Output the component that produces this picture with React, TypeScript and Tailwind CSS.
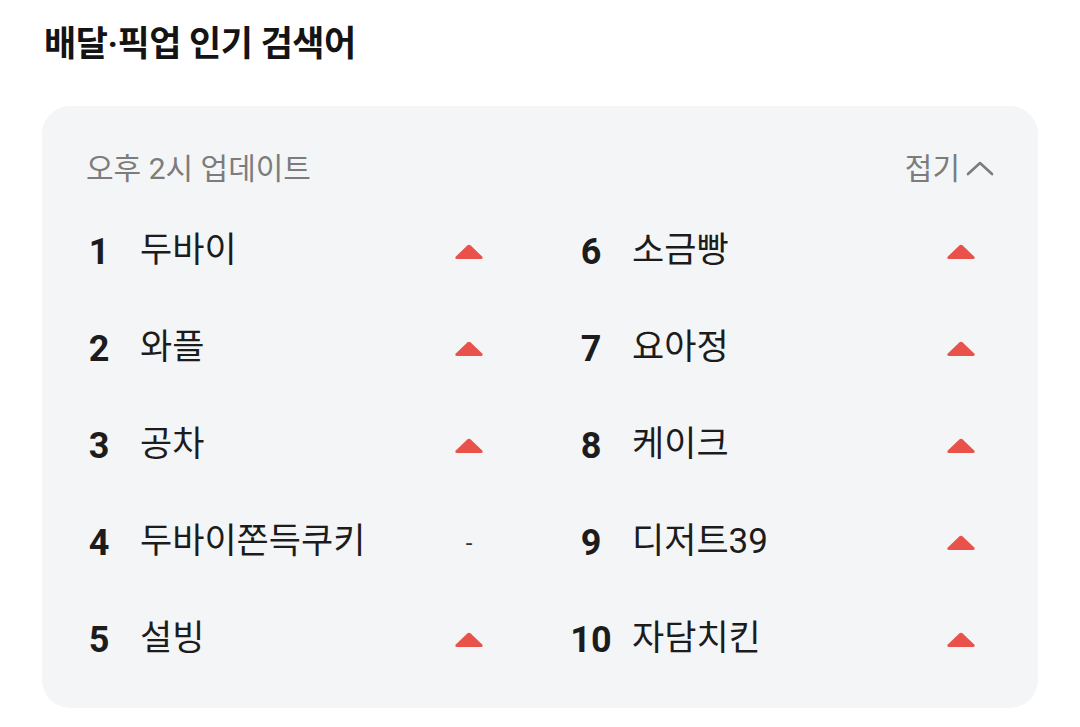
import React from "react";

const left = [
  { rank: 1, word: "두바이", trend: "up" },
  { rank: 2, word: "와플", trend: "up" },
  { rank: 3, word: "공차", trend: "up" },
  { rank: 4, word: "두바이쫀득쿠키", trend: "same" },
  { rank: 5, word: "설빙", trend: "up" },
];

const right = [
  { rank: 6, word: "소금빵", trend: "up" },
  { rank: 7, word: "요아정", trend: "up" },
  { rank: 8, word: "케이크", trend: "up" },
  { rank: 9, word: "디저트39", trend: "up" },
  { rank: 10, word: "자담치킨", trend: "up" },
];

const UpMark = () => (
  <svg width="30" height="16" viewBox="0 0 30 16" aria-hidden="true">
    <path
      d="M13.3 1.6 Q15 0 16.7 1.6 L28.2 12.6 Q29.6 14.9 27 15 L3 15 Q0.4 14.9 1.8 12.6 Z"
      fill="#e9524a"
    />
  </svg>
);

const Row = ({ rank, word, trend }: { rank: number; word: string; trend: string }) => (
  <li className="flex h-[97px] items-center">
    <span className="w-[26px] text-center text-[36px] font-bold text-[#1c1c1c] whitespace-nowrap flex justify-center">
      {rank}
    </span>
    <span className="ml-[28px] flex-1 text-[35px] text-[#1c1c1c] whitespace-nowrap">{word}</span>
    <span className="flex w-[30px] justify-center">
      {trend === "up" ? <UpMark /> : <span className="text-[24px] text-[#333]">-</span>}
    </span>
  </li>
);

export default function App() {
  return (
    <div className="w-[1080px] h-[727px] bg-white [font-family:Roboto,'Noto_Sans_CJK_KR',sans-serif] overflow-hidden">
      <h1 className="pl-[44px] pt-[22px] text-[35px] font-bold leading-[46px] text-[#141414] tracking-[-0.5px]">
        배달·픽업 인기 검색어
      </h1>
      <section className="mx-[42px] mt-[38px] rounded-[28px] bg-[#f4f5f7] pl-[44px] pr-[44px] pt-[44px] pb-[20px]">
        <div className="flex h-[36px] items-center justify-between text-[30px] text-[#7c7c7c]">
          <span>오후 2시 업데이트</span>
          <button className="flex items-center gap-[6px] text-[#7c7c7c]">
            접기
            <svg width="28" height="16" viewBox="0 0 28 16" fill="none" aria-hidden="true">
              <path d="M2 14 L14 3 L26 14" stroke="#7c7c7c" strokeWidth="2.6" strokeLinecap="round" strokeLinejoin="round" />
            </svg>
          </button>
        </div>
        <div className="mt-[17px] grid grid-cols-[398px_398px] gap-x-[94px]">
          <ul>
            {left.map((r) => (
              <Row key={r.rank} {...r} />
            ))}
          </ul>
          <ul>
            {right.map((r) => (
              <Row key={r.rank} {...r} />
            ))}
          </ul>
        </div>
      </section>
    </div>
  );
}
